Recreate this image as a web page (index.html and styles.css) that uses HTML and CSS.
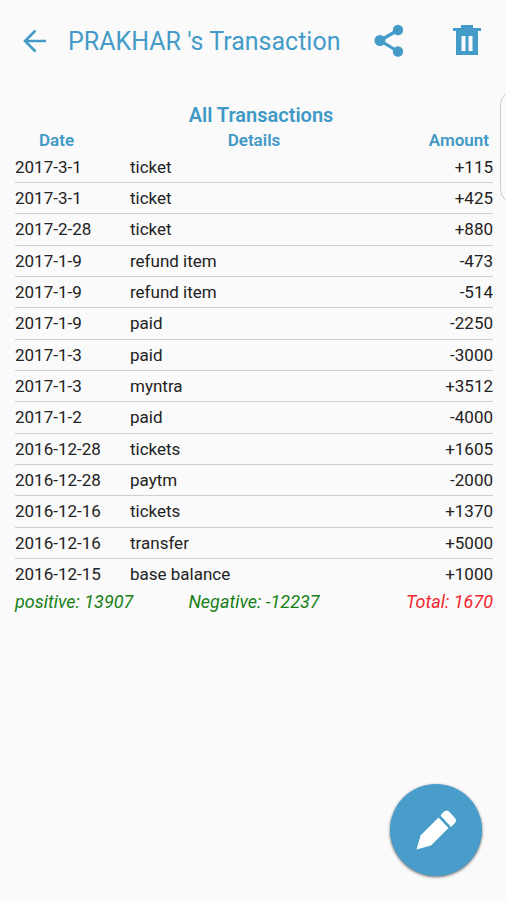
FILE: index.html
```html
<!DOCTYPE html>
<html lang="en">
<head>
<meta charset="utf-8">
<meta name="viewport" content="width=device-width, initial-scale=1">
<title>PRAKHAR 's Transaction</title>
<link rel="stylesheet" href="styles.css">
</head>
<body>
<header class="bar">
  <button class="icon-btn" aria-label="Back">
    <svg width="24" height="24" viewBox="0 0 24 24" fill="none" stroke="currentColor" stroke-width="2.600"><path d="M23 12H2.500M12.500 1.500L2 12l10.500 10.500"/></svg>
  </button>
  <h1 class="bar-title">PRAKHAR 's Transaction</h1>
  <button class="icon-btn share" aria-label="Share">
    <svg width="32" height="34" viewBox="0 0 32 34" fill="currentColor"><path d="M24 6L6 16.500l18 11" fill="none" stroke="currentColor" stroke-width="3.200"/><circle cx="24" cy="6" r="5.200"/><circle cx="6" cy="16.500" r="5.500"/><circle cx="24" cy="27.500" r="5.200"/></svg>
  </button>
  <button class="icon-btn" aria-label="Delete">
    <svg width="30" height="32" viewBox="0 0 30 32" fill="currentColor"><path fill-rule="evenodd" d="M9 0h12v3h8v3h-3v24H4V6H1V3h8zM9.500 11v15h4V11zM16.500 11v15h4V11z"/></svg>
  </button>
</header>
<main class="content">
  <h2 class="heading">All Transactions</h2>
  <table class="list">
    <thead><tr><th class="date">Date</th><th class="details">Details</th><th class="amount">Amount</th></tr></thead>
    <tbody>
      <tr><td>2017-3-1</td><td>ticket</td><td>+115</td></tr>
      <tr><td>2017-3-1</td><td>ticket</td><td>+425</td></tr>
      <tr><td>2017-2-28</td><td>ticket</td><td>+880</td></tr>
      <tr><td>2017-1-9</td><td>refund item</td><td>-473</td></tr>
      <tr><td>2017-1-9</td><td>refund item</td><td>-514</td></tr>
      <tr><td>2017-1-9</td><td>paid</td><td>-2250</td></tr>
      <tr><td>2017-1-3</td><td>paid</td><td>-3000</td></tr>
      <tr><td>2017-1-3</td><td>myntra</td><td>+3512</td></tr>
      <tr><td>2017-1-2</td><td>paid</td><td>-4000</td></tr>
      <tr><td>2016-12-28</td><td>tickets</td><td>+1605</td></tr>
      <tr><td>2016-12-28</td><td>paytm</td><td>-2000</td></tr>
      <tr><td>2016-12-16</td><td>tickets</td><td>+1370</td></tr>
      <tr><td>2016-12-16</td><td>transfer</td><td>+5000</td></tr>
      <tr><td>2016-12-15</td><td>base balance</td><td>+1000</td></tr>
    </tbody>
  </table>
  <div class="totals">
    <span>positive: 13907</span>
    <span class="negative">Negative: -12237</span>
    <span class="total">Total: 1670</span>
  </div>
</main>
<div class="edge-handle"></div>
<button class="fab" aria-label="Edit">
  <svg width="42" height="42" viewBox="0 0 42 42" fill="currentColor"><path d="M23.500 8.500l10 10.500-17.500 17.500L1.500 40.500 5.500 26.500z"/><path d="M25.500 6.500l3-3.500q3-3 6 0l5 5.500q3 3 0 6l-3.500 3.500z"/></svg>
</button>
</body>
</html>
```
FILE: styles.css
```css
* {
  box-sizing: border-box;
}

body {
  margin: 0;
  min-height: 100vh;
  overflow-x: hidden;
  background: #fafafa;
  color: #222;
  font-family: Roboto, "Liberation Sans", sans-serif;
  font-size: 17px;
}

button {
  border: 0;
  padding: 0;
  background: none;
  color: #459bc8;
}

.bar {
  display: flex;
  align-items: center;
  height: 82px;
  padding: 0 24px 0 23px;
}

.icon-btn {
  display: flex;
}

.bar-title {
  flex: 1;
  margin: 0 0 0 21px;
  color: #459bc8;
  font-size: 25px;
  font-weight: 400;
  white-space: nowrap;
}

.share {
  margin-right: 46px;
}

.content {
  padding: 20px 13px 0 15px;
}

.heading {
  margin: 0;
  padding-left: 14px;
  color: #3f98c6;
  font-size: 20px;
  font-weight: 600;
  line-height: 26px;
  text-align: center;
}

.list {
  width: 100%;
  table-layout: fixed;
  border-collapse: separate;
  border-spacing: 0;
}

th,
td {
  padding: 0;
  text-align: left;
}

th {
  color: #3f98c6;
  font-weight: 600;
  line-height: 24px;
}

.date {
  width: 115px;
  padding-left: 24px;
}

.details {
  text-align: center;
}

.amount {
  width: 115px;
  padding-right: 4px;
  text-align: right;
}

td {
  border-bottom: 1px solid #cfcfcf;
  line-height: 30px;
}

tr:nth-child(3n) td {
  padding-bottom: 1px;
}

td:last-child {
  text-align: right;
}

tbody tr:last-child td {
  border-bottom: 0;
}

.totals {
  display: grid;
  grid-template-columns: 1fr auto 1fr;
  color: #168016;
  font-size: 18px;
  font-style: italic;
  line-height: 26px;
}

.total {
  color: #f32630;
  text-align: right;
}

.edge-handle {
  position: absolute;
  top: 90px;
  right: -24px;
  width: 30px;
  height: 114px;
  border: 1px solid #ccc;
  border-radius: 15px;
  background: #fcfcfc;
}

.fab {
  position: fixed;
  right: 24px;
  bottom: 24px;
  display: flex;
  align-items: center;
  justify-content: center;
  width: 92px;
  height: 92px;
  border-radius: 50%;
  background: #489dca;
  color: #fff;
  box-shadow: 0 1px 3px rgba(0, 0, 0, 0.6);
}
```
